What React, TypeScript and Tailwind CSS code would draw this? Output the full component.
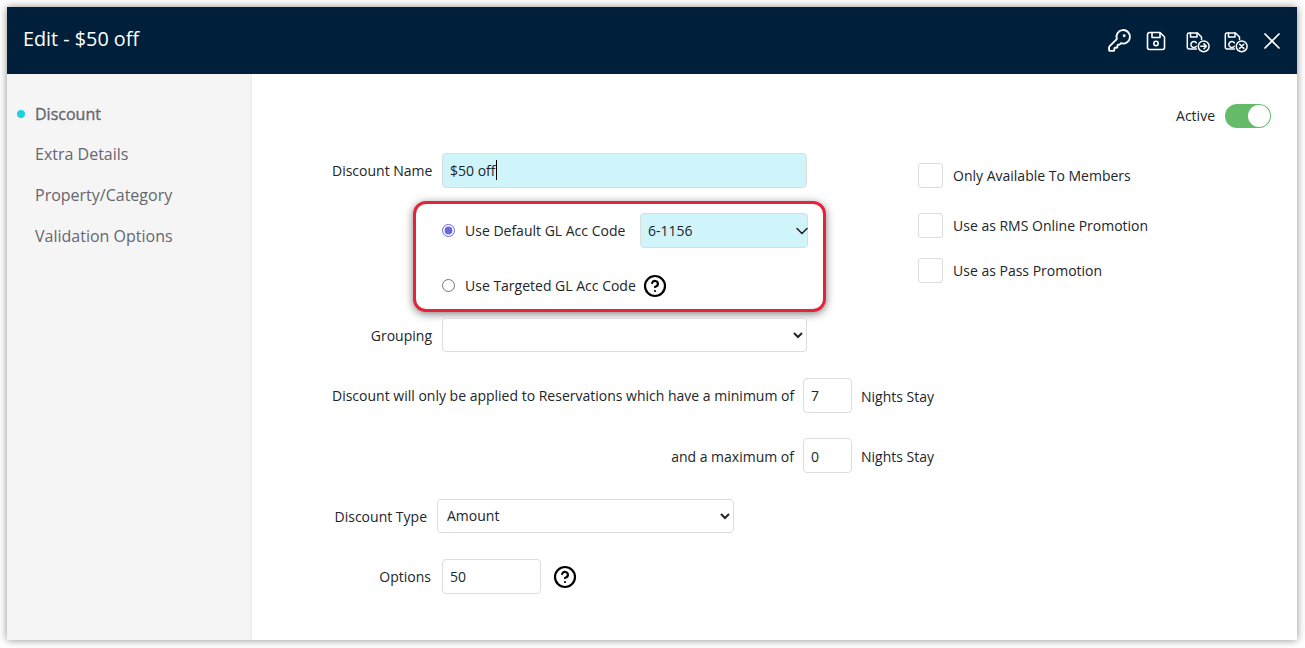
import { ChevronDown, CircleHelp, KeyRound, X } from "lucide-react";

const FloppyBody = ({ children }: { children?: React.ReactNode }) => (
    <svg width="24" height="24" viewBox="0 0 24 24" fill="none" stroke="currentColor" strokeWidth="1.5" strokeLinejoin="round" strokeLinecap="round">
        <path d="M10.5 20H3a1.7 1.7 0 0 1-1.7-1.7V5.7A1.7 1.7 0 0 1 3 4h8.5l4 4v2.5" />
        <path d="M4.5 4v4h6.5V4" />
        <path d="M10.3 13.8a3 3 0 1 0 0 3.6" />
        {children}
    </svg>
);

const SaveIcon = () => (
    <svg width="20" height="20" viewBox="0 0 20 20" fill="none" stroke="currentColor" strokeWidth="1.6" strokeLinejoin="round">
        <path d="M3.5 1.5h10.5l4.5 4.5v10.5a2 2 0 0 1-2 2h-13a2 2 0 0 1-2-2v-13a2 2 0 0 1 2-2z" />
        <path d="M6 2v4.5h8V2" />
        <circle cx="10" cy="12.5" r="2.2" />
    </svg>
);

const SaveCloseIcon = () => (
    <FloppyBody>
        <circle cx="17.7" cy="17.3" r="5.4" />
        <path d="M15.6 15.2l4.2 4.2M19.8 15.2l-4.2 4.2" />
    </FloppyBody>
);

const SaveNextIcon = () => (
    <FloppyBody>
        <circle cx="17.7" cy="17.3" r="5.4" />
        <path d="M14.8 17.3h5.6M18 14.9l2.4 2.4-2.4 2.4" />
    </FloppyBody>
);

const menuItems = ["Extra Details", "Property/Category", "Validation Options"];

const inputCls = "h-[35px] rounded-[4px] border border-[#dcdcdc] px-[7px] text-[14px] text-[#212529] outline-none";
const selectCls = "rounded-[4px] border border-[#dcdcdc] text-[14px] text-[#212529] outline-none";

const Checkbox = ({ label, className }: { label: string; className: string }) => (
    <div className={`flex items-center gap-[10px] ${className}`}>
        <span className="h-[25px] w-[25px] rounded-[3px] border border-[#dcdcdc] bg-white" />
        <span className="text-[14px] text-[#212529]">{label}</span>
    </div>
);

const App = () => {
    return (
        <div className="h-[648px] w-[1305px] overflow-hidden bg-white p-[7px] font-['Open_Sans',sans-serif]">
            <div className="flex h-[633px] w-[1290px] flex-col bg-white shadow-[0_0_8px_rgba(0,0,0,0.45)]">
                <header className="flex h-[67px] shrink-0 items-center justify-between bg-[#001f3b] pl-[16px] pr-[11px] text-white">
                    <h1 className="mb-[4px] text-[19.8px] leading-none">Edit - $50 off</h1>
                    <div className="flex items-center">
                        <KeyRound size={25} strokeWidth={1.8} className="mr-[14px]" />
                        <SaveIcon />
                        <span className="ml-[20px]"><SaveNextIcon /></span>
                        <span className="ml-[14px]"><SaveCloseIcon /></span>
                        <X size={28} strokeWidth={1.5} className="ml-[10px]" />
                    </div>
                </header>
                <div className="flex min-h-0 flex-1">
                    <aside className="w-[245px] shrink-0 border-r border-[#ececec] bg-[#f5f5f5] pt-[29px] text-[16px] text-[#66666f]">
                        <div className="relative flex h-[21px] items-center pl-[28px] font-medium [-webkit-text-stroke:0.35px_#66666f]">
                            <span className="absolute left-[10px] h-[8px] w-[8px] rounded-full bg-[#1fd1e1]" />
                            Discount
                        </div>
                        {menuItems.map((item) => (
                            <div key={item} className="mt-[19.7px] flex h-[21px] items-center pl-[28px]">{item}</div>
                        ))}
                    </aside>
                    <main className="flex-1 pl-[80px] pr-[26px] pt-[30px]">
                        <div className="flex items-center justify-end gap-[10px]">
                            <span className="pb-[2px] text-[14px] text-[#212529]">Active</span>
                            <span className="flex h-[24px] w-[46px] items-center justify-end rounded-full bg-[#66bb6a] pr-[1px]">
                                <span className="h-[22px] w-[22px] rounded-full bg-white" />
                            </span>
                        </div>
                        <div className="mt-[25px] flex">
                            <div className="w-[494px]">
                                <div className="flex items-center">
                                    <label className="w-[100px] whitespace-nowrap text-right text-[14px] text-[#212529]">Discount Name</label>
                                    <div className="relative ml-[10px]">
                                        <input readOnly defaultValue="$50 off" className={`${inputCls} w-[365px] bg-[#cff5fb]`} />
                                        <span className="absolute left-[54px] top-[7px] h-[20px] w-px bg-black" />
                                    </div>
                                </div>
                                <div className="ml-[81px] mt-[13px] h-[111px] w-[413px] rounded-[13px] border-[3px] border-[#e3243b] bg-white pl-[26px] pt-[9px] shadow-[0_2px_8px_rgba(0,0,0,0.5)]">
                                    <div className="flex h-[35px] items-center text-[14px] text-[#212529]">
                                        <input type="radio" name="gl" defaultChecked className="m-0 h-[13px] w-[13px] accent-[#6a67d8]" />
                                        <span className="ml-[10px] w-[175px]">Use Default GL Acc Code</span>
                                        <div className="relative">
                                            <select className={`${selectCls} block h-[35px] w-[168px] appearance-none bg-[#cff5fb] pl-[7px]`} defaultValue="6-1156">
                                                <option>6-1156</option>
                                            </select>
                                            <ChevronDown size={20} strokeWidth={1.9} className="absolute right-[-4px] top-[8px] text-[#212529]" />
                                        </div>
                                    </div>
                                    <div className="mt-[20px] flex h-[35px] items-center text-[14px] text-[#212529]">
                                        <input type="radio" name="gl" className="m-0 h-[13px] w-[13px]" />
                                        <span className="ml-[10px]">Use Targeted GL Acc Code</span>
                                        <CircleHelp size={24} strokeWidth={2.2} className="ml-[7px] text-black" />
                                    </div>
                                </div>
                                <div className="mt-[6px] flex items-center">
                                    <label className="w-[100px] text-right text-[14px] text-[#212529]">Grouping</label>
                                    <select className={`${selectCls} ml-[10px] h-[34px] w-[365px] bg-white`}>
                                        <option></option>
                                    </select>
                                </div>
                            </div>
                            <div className="ml-[92px] pt-[10px]">
                                <Checkbox label="Only Available To Members" className="" />
                                <Checkbox label="Use as RMS Online Promotion" className="mt-[25px]" />
                                <Checkbox label="Use as Pass Promotion" className="mt-[20px]" />
                            </div>
                        </div>
                        <div className="mt-[26px] flex items-center text-[14px] text-[#212529]">
                            <span className="w-[462px] whitespace-nowrap text-right">Discount will only be applied to Reservations which have a minimum of</span>
                            <input readOnly defaultValue="7" className={`${inputCls} ml-[9px] w-[49px] bg-white`} />
                            <span className="ml-[9px] pt-[2px]">Nights Stay</span>
                        </div>
                        <div className="mt-[25px] flex items-center text-[14px] text-[#212529]">
                            <span className="w-[462px] whitespace-nowrap pt-[2px] text-right">and a maximum of</span>
                            <input readOnly defaultValue="0" className={`${inputCls} ml-[9px] w-[49px] bg-white pt-[2px]`} />
                            <span className="ml-[9px] pt-[2px]">Nights Stay</span>
                        </div>
                        <div className="mt-[26px] flex items-center text-[14px] text-[#212529]">
                            <span className="w-[95px] whitespace-nowrap text-right">Discount Type</span>
                            <select className={`${selectCls} ml-[10px] h-[34px] w-[297px] bg-white pb-[2px] pl-[5px]`} defaultValue="Amount">
                                <option>Amount</option>
                            </select>
                        </div>
                        <div className="mt-[26px] flex items-center text-[14px] text-[#212529]">
                            <span className="w-[99px] whitespace-nowrap text-right">Options</span>
                            <input readOnly defaultValue="50" className={`${inputCls} ml-[11px] w-[99px] bg-white`} />
                            <CircleHelp size={24} strokeWidth={2.2} className="ml-[12px] text-black" />
                        </div>
                    </main>
                </div>
            </div>
        </div>
    );
};

export default App;
